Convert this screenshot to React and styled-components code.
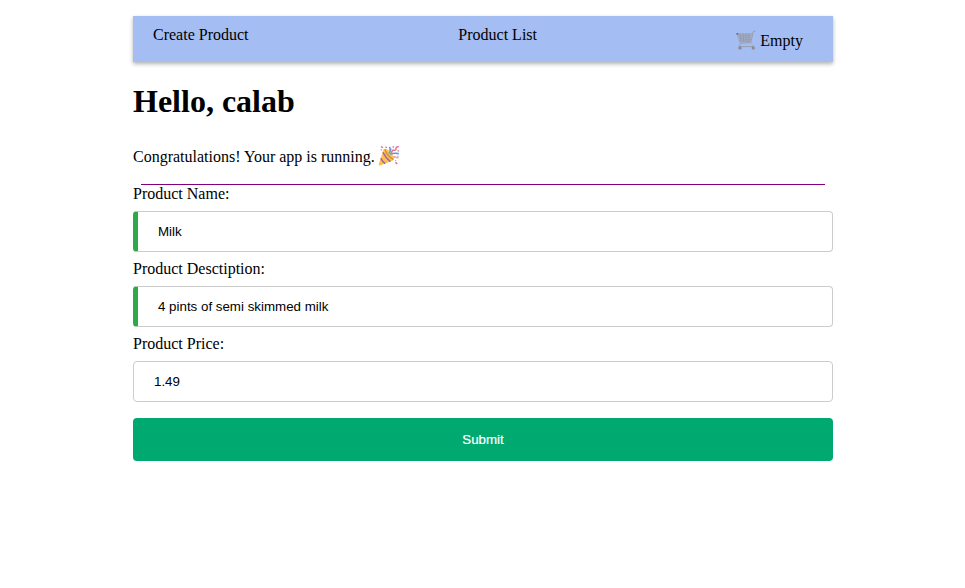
import React from "react";
import styled, { createGlobalStyle } from "styled-components";

const GlobalStyle = createGlobalStyle`
  body {
    margin: 0;
    background: #fff;
    color: #000;
    font: 16px/18px "Liberation Serif", "Times New Roman", serif;
  }
`;

const Page = styled.main`
  width: 700px;
  margin: 0 auto 0 133px;
  padding-top: 16px;
`;

const NavBar = styled.nav`
  display: flex;
  justify-content: space-between;
  box-sizing: border-box;
  height: 46px;
  padding: 10px 30px 0 20px;
  background: #a4bdf3;
  box-shadow: 0 2px 4px rgba(0, 0, 0, 0.3);
`;

const NavLink = styled.a`
  width: ${(p) => p.$width || "auto"};
  height: 18px;
  color: inherit;
  text-decoration: none;
  white-space: nowrap;
`;

const CartStatus = styled.div`
  display: flex;
  align-items: flex-start;
  gap: 3px;
  height: 30px;
  padding-top: 3px;
`;

const CartText = styled.span`
  padding-top: 3px;
`;

const Title = styled.h1`
  margin: 21px 0 0;
  font-size: 32px;
  line-height: 37px;
`;

const Intro = styled.p`
  display: flex;
  gap: 3px;
  height: 25px;
  margin: 23px 0 0;
`;

const IntroText = styled.span`
  padding-top: 5px;
`;

const Icon = styled.svg`
  display: block;
  flex: none;
  width: 22px;
  height: 22px;
`;

const PartyIcon = styled(Icon)`
  margin-top: 2px;
`;

const Divider = styled.hr`
  height: 1px;
  margin: 16px 8px 0;
  border: 0;
  background: purple;
`;

const Form = styled.form`
  display: flex;
  flex-direction: column;
`;

const Label = styled.label`
  height: 18px;
`;

const Input = styled.input`
  box-sizing: border-box;
  width: 100%;
  height: 41px;
  margin: 8px 0;
  padding: 12px 20px;
  border: 1px solid #ccc;
  border-left: ${(p) => (p.$valid ? "5px solid #2fa84b" : "1px solid #ccc")};
  border-radius: 4px;
  background: #fff;
  color: #000;
  font: 13.333px "Liberation Sans", Arial, sans-serif;
  outline: none;
`;

const SubmitButton = styled.button`
  height: 43px;
  margin: 8px 0;
  border: 0;
  border-radius: 4px;
  background: #00a970;
  color: #fff;
  font: 13.333px "Liberation Sans", Arial, sans-serif;
  -webkit-text-stroke: 0.2px #fff;
`;

const Cart = () => (
  <Icon viewBox="0 0 22 22" fill="none" aria-hidden="true">
    <path d="M1.8 4.9 17 4.8 15.8 12 4 12.8Z" fill="#a5a9b8" fillOpacity=".6" />
    <path d="M1.8 4.9 17 4.8M2.4 7l14-.2M3 9.2l13-.4M3.5 11.2l12.3-.5M4 13l11.8-.7M5 4.9l1.3 8M8 4.9l.6 8M11 4.9l.1 8M14 4.9l-.5 8" stroke="#9094a3" strokeWidth=".65" />
    <path d="M20.5 2 18.2 2.7 15.8 13.6 5.5 14.3 4 17.6H18.5" stroke="#999ca8" strokeWidth=".95" strokeLinejoin="round" />
    <path d="m15.8 13.6 3 4" stroke="#a9adb9" strokeWidth=".8" />
    <path d="M1.4 4.9h1.9" stroke="#535c6b" strokeWidth="1.3" />
    <circle cx="5" cy="19" r="1.6" fill="#807d83" />
    <circle cx="18.3" cy="18.9" r="1.6" fill="#807d83" />
    <circle cx="5" cy="19" r=".6" fill="#c7b7a5" />
    <circle cx="18.3" cy="18.9" r=".6" fill="#c7b7a5" />
  </Icon>
);

const Party = () => (
  <PartyIcon viewBox="0 0 22 22" fill="none" aria-hidden="true">
    <path d="M5.6 4.6Q6.7 3 9 4.5l6.8 8.3q1 2.1-.8 2.8L2 20.5Q.3 21 .8 19.3Z" fill="#fac14e" />
    <path d="M4.9 7.2q2.8 6 7.5 9.4M2.8 13.2q1.6 3.4 4.5 5.5" stroke="#a45fa9" strokeWidth="1.5" />
    <path d="M7.2 4.4q1.2 6.2 8 9.8" stroke="#dc8f3d" strokeWidth="1.6" />
    <path d="M8.1 4.3q5.1 2.2 7.4 8.8" stroke="#ffcf60" strokeWidth="1.4" />
    <path d="M11.2 8.5q2-3.8.2-6.7M12.2 9.3q4-1.6 8.6-.7" stroke="#5b9adb" strokeWidth="1.6" />
    <path d="M13.5 7.8q.5-3 2.7-2.5 2.1.2 1.8-2.3.2-1.4 2.8-1.2" stroke="#e86f91" strokeWidth="1.5" />
    <path d="m15 12 2.5-.2 1.3 1.1 1.7-.2" stroke="#eea36c" strokeWidth="1.3" />
    <path d="m3 1.6 1.9 1M7.5 1.8l1.3 1M14.7 1.5l1.2 1M20 5.2l.5 1.2M17.4 17.4l1.9 1.6" stroke="#df6b92" strokeWidth="1.4" />
    <path d="m3.9 4.4-1.3.8M19.3 11.1l1.2.7" stroke="#bc9ed3" strokeWidth="1.2" />
    <path d="m13.4 4.6.9-.8M17.1 15.2l1 .5" stroke="#7db5d3" strokeWidth="1.1" />
  </PartyIcon>
);

const fields = [
  { id: "name", label: "Product Name:", value: "Milk", valid: true },
  { id: "description", label: "Product Desctiption:", value: "4 pints of semi skimmed milk", valid: true },
  { id: "price", label: "Product Price:", value: "1.49", valid: false },
];

export default function App() {
  return (
    <>
      <GlobalStyle />
      <Page>
        <NavBar>
          <NavLink $width="107px">Create Product</NavLink>
          <NavLink>Product List</NavLink>
          <CartStatus>
            <Cart />
            <CartText>Empty</CartText>
          </CartStatus>
        </NavBar>
        <Title>Hello, calab</Title>
        <Intro>
          <IntroText>Congratulations! Your app is running.</IntroText>
          <Party />
        </Intro>
        <Divider />
        <Form onSubmit={(event) => event.preventDefault()}>
          {fields.map((field) => (
            <React.Fragment key={field.id}>
              <Label htmlFor={field.id}>{field.label}</Label>
              <Input id={field.id} defaultValue={field.value} $valid={field.valid} />
            </React.Fragment>
          ))}
          <SubmitButton type="submit">Submit</SubmitButton>
        </Form>
      </Page>
    </>
  );
}
